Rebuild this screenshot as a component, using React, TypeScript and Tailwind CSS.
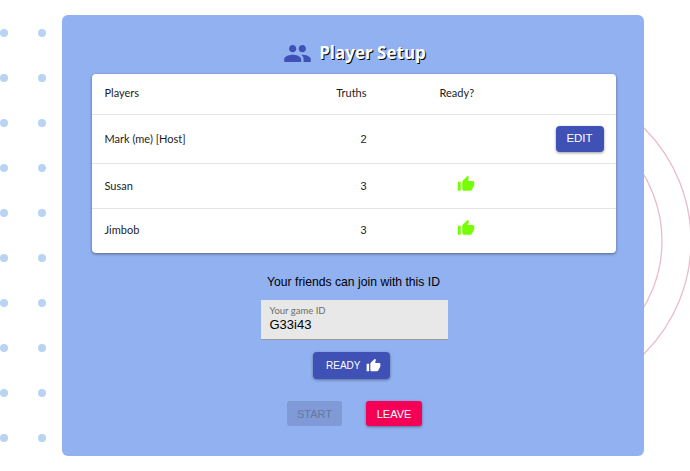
const PEOPLE = "M16 11c1.66 0 2.99-1.34 2.99-3S17.66 5 16 5c-1.66 0-3 1.34-3 3s1.34 3 3 3zm-8 0c1.66 0 2.99-1.34 2.99-3S9.66 5 8 5C6.34 5 5 6.34 5 8s1.34 3 3 3zm0 2c-2.33 0-7 1.17-7 3.5V19h14v-2.5c0-2.33-4.67-3.5-7-3.5zm8 0c-.29 0-.62.02-.97.05 1.16.84 1.97 1.97 1.97 3.45V19h6v-2.5c0-2.33-4.67-3.5-7-3.5z";
const THUMB = "M1 21h4V9H1v12zm22-11c0-1.1-.9-2-2-2h-6.31l.95-4.57.03-.32c0-.41-.17-.79-.44-1.06L14.17 1 7.59 7.59C7.22 7.95 7 8.45 7 9v10c0 1.1.9 2 2 2h9c.83 0 1.54-.5 1.84-1.22l3.02-6.03c.09-.23.14-.47.14-.75v-2z";

const Thumb = ({ className }: { className: string }) => (
  <svg viewBox="0 0 24 24" className={className} fill="currentColor">
    <path d={THUMB} />
  </svg>
);

const rows = [
  { name: "Mark (me) [Host]", truths: 2, ready: false, edit: true, height: "h-[49px]" },
  { name: "Susan", truths: 3, ready: true, edit: false, height: "h-[45px]" },
  { name: "Jimbob", truths: 3, ready: true, edit: false, height: "h-[44px] pb-[2px]" },
];

const Background = () => (
  <div className="absolute inset-0 overflow-hidden">
    <div className="absolute left-0 top-[29px] grid grid-cols-[8px_8px] gap-x-[30px] gap-y-[37px]">
      {Array.from({ length: 20 }).map((_, i) => (
        <div key={i} className="w-2 h-2 rounded-full bg-[#b9d3f2]" />
      ))}
    </div>
    <svg className="absolute left-0 top-0" width="690" height="471" fill="none" stroke="#eabccb" strokeWidth="1.3">
      <circle cx="532" cy="241" r="130" />
      <circle cx="532" cy="241" r="159" />
    </svg>
  </div>
);

export default function App() {
  return (
    <div className="relative w-[690px] h-[471px] overflow-hidden bg-white font-['Lato',sans-serif] text-[#1c1c1c]">
      <Background />
      <div className="relative ml-[62px] top-[15px] w-[582px] h-[441px] rounded-[6px] bg-[#92b1f1] flex flex-col items-center">
        <div className="h-[59px] flex items-center gap-[7px] pt-[17px] ml-[3px]">
          <svg viewBox="0 0 24 24" className="w-[29px] h-[29px] text-[#3f51b5]" fill="currentColor">
            <path d={PEOPLE} />
          </svg>
          <h1 className="text-[17px] font-bold text-white font-['Open_Sans',sans-serif] [text-shadow:1px_1px_0_#000]">
            Player Setup
          </h1>
        </div>

        <div className="w-[524px] ml-[1px] bg-white rounded-[4px] shadow-[0_1px_3px_rgba(0,0,0,0.45)] text-[11px]">
          <div className="grid grid-cols-[192px_70px_1fr_auto] items-center h-[41px] pb-[2px] px-[13px] border-b border-[#e4e4e4]">
            <span>Players</span>
            <span className="text-right">Truths</span>
            <span className="pl-[73px]">Ready?</span>
            <span />
          </div>
          {rows.map((row, i) => (
            <div
              key={row.name}
              className={`grid grid-cols-[192px_70px_1fr_auto] items-center px-[13px] pr-3 ${row.height} ${i < 2 ? "border-b border-[#e4e4e4]" : ""}`}
            >
              <span>{row.name}</span>
              <span className="text-right font-['Liberation_Sans',sans-serif]">{row.truths}</span>
              <span className="pl-[90px]">
                {row.ready && <Thumb className="w-[18px] h-[18px] text-[#76ff03] -mt-1" />}
              </span>
              {row.edit ? (
                <button className="w-12 h-[26px] rounded-[4px] bg-[#3f51b5] text-white text-[11.5px] font-['Liberation_Sans',sans-serif] shadow-[0_1px_3px_rgba(0,0,0,0.4)]">
                  EDIT
                </button>
              ) : (
                <span />
              )}
            </div>
          ))}
        </div>

        <p className="mt-[20px] ml-[1px] text-[12.2px] text-black font-['Liberation_Sans',sans-serif]">
          Your friends can join with this ID
        </p>

        <div className="mt-[9px] ml-[2px] w-[187px] h-10 bg-[#e8e8e8] border-b border-[#9a9a9a] px-[9px] pt-[5px]">
          <div className="text-[9.5px] leading-3 text-[#6d6d6d]">Your game ID</div>
          <div className="text-[13px] leading-4 text-black font-['Liberation_Sans',sans-serif]">G33i43</div>
        </div>

        <button className="mt-3 ml-[-3px] w-[77px] h-[27px] pl-[13px] rounded-[4px] bg-[#3f51b5] text-white text-[10px] flex items-center justify-start gap-[6px] font-['Liberation_Sans',sans-serif] shadow-[0_1px_3px_rgba(0,0,0,0.4)]">
          READY
          <Thumb className="w-[15px] h-[15px]" />
        </button>

        <div className="mt-[22px] flex gap-6 ml-[3px]">
          <button className="w-[55px] h-[25px] rounded-[3px] bg-[#7f9ad6] text-[#65789f] text-[11px] font-['Liberation_Sans',sans-serif]">
            START
          </button>
          <button className="w-[56px] h-[25px] rounded-[3px] bg-[#f50057] text-white text-[11px] font-['Liberation_Sans',sans-serif] shadow-[0_1px_3px_rgba(0,0,0,0.4)]">
            LEAVE
          </button>
        </div>
      </div>
    </div>
  );
}
